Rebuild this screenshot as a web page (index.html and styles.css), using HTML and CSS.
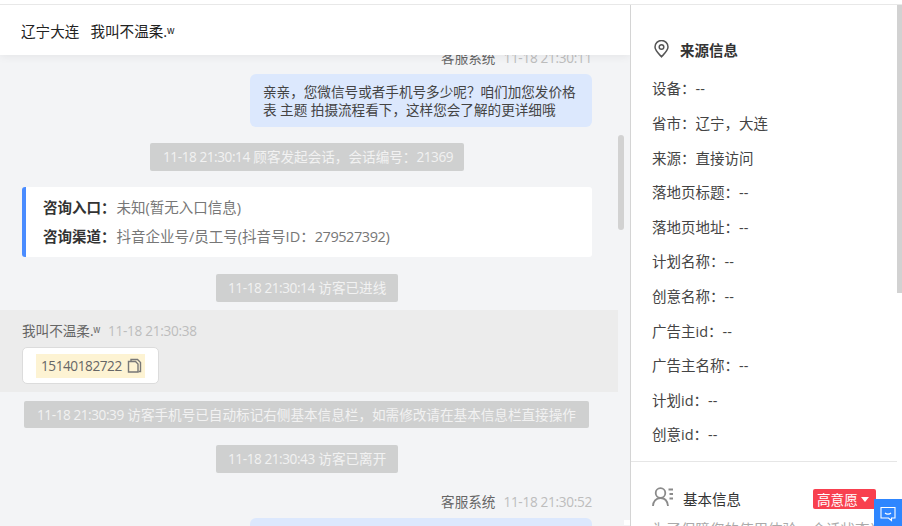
FILE: index.html
```html
<!DOCTYPE html>
<html lang="zh-CN">
<head>
<meta charset="utf-8">
<title>会话详情</title>
<link rel="stylesheet" href="styles.css">
</head>
<body>
<div class="app">
  <main class="chat">
    <header class="chat-head"><span>辽宁大连</span><span>我叫不温柔.ʷ</span></header>
    <div class="list">
      <div class="meta meta-right meta-first"><span class="who">客服系统</span><span class="time">11-18 21:30:11</span></div>
      <div class="bubble-row"><div class="bubble">亲亲，您微信号或者手机号多少呢？咱们加您发价格表 主题 拍摄流程看下，这样您会了解的更详细哦</div></div>
      <div class="sys sys-a"><span class="num">11-18 21:30:14</span> 顾客发起会话，会话编号：<span class="num">21369</span></div>
      <div class="card">
        <p class="card-row"><b>咨询入口：</b><span>未知(暂无入口信息)</span></p>
        <p class="card-row"><b>咨询渠道：</b><span>抖音企业号/员工号(抖音号ID：<span class="num">279527392</span>)</span></p>
      </div>
      <div class="sys sys-b"><span class="num">11-18 21:30:14</span> 访客已进线</div>
      <section class="visitor">
        <div class="meta"><span class="who">我叫不温柔.ʷ</span><span class="time">11-18 21:30:38</span></div>
        <div class="phone-box">
          <div class="phone"><span class="num">15140182722</span>
            <svg class="copy" width="15" height="15" viewBox="0 0 15 15" fill="none" stroke="#777" stroke-width="1.4"><path d="M4 3.500V1.500h6.500l3 3v9h-2"/><path d="M1.500 3.500h7l2.500 2.500v8h-9.500z"/></svg>
          </div>
        </div>
      </section>
      <div class="sys sys-c"><span class="num">11-18 21:30:39</span> 访客手机号已自动标记右侧基本信息栏，如需修改请在基本信息栏直接操作</div>
      <div class="sys sys-d"><span class="num">11-18 21:30:43</span> 访客已离开</div>
      <div class="meta meta-right meta-last"><span class="who">客服系统</span><span class="time">11-18 21:30:52</span></div>
      <div class="bubble-row"><div class="bubble">亲亲</div></div>
    </div>
    <div class="chat-thumb"></div>
    <div class="chat-corner"></div>
  </main>
  <aside class="side">
    <section class="source">
      <h2 class="side-title">
        <svg width="15" height="18" viewBox="0 0 15 18" fill="none" stroke="#555" stroke-width="1.500"><path d="M7.500 16.800C4 13 1 10.300 1 7a6.500 6.500 0 0 1 13 0c0 3.300-3 6-6.500 9.800z"/><circle cx="7.500" cy="7" r="2.300"/></svg>
        <span>来源信息</span>
      </h2>
      <p class="field">设备：--</p>
      <p class="field">省市：辽宁，大连</p>
      <p class="field">来源：直接访问</p>
      <p class="field">落地页标题：--</p>
      <p class="field">落地页地址：--</p>
      <p class="field">计划名称：--</p>
      <p class="field">创意名称：--</p>
      <p class="field">广告主id：--</p>
      <p class="field">广告主名称：--</p>
      <p class="field">计划id：--</p>
      <p class="field">创意id：--</p>
    </section>
    <section class="basic">
      <div class="basic-head">
        <svg class="basic-icon" width="22" height="20" viewBox="0 0 22 20" fill="none" stroke="#8a8a8a" stroke-width="1.800"><circle cx="8.500" cy="6" r="4.800"/><path d="M1 19c0-4.500 3-8 7.500-8s7 3 7.500 8"/><path d="M16.500 2.500H21M17.500 7H21M17.500 11.500H21"/></svg>
        <span class="basic-title">基本信息</span>
        <span class="tag">高意愿<i class="caret"></i></span>
      </div>
      <p class="tip">为了保障您的使用体验，会话状态当日</p>
    </section>
    <div class="side-thumb"></div>
    <button class="fab" aria-label="消息">
      <svg width="16" height="16" viewBox="0 0 16 16" fill="none" stroke="#fff" stroke-width="1.100"><path d="M1 1.500h14v10.500h-3.500v2.500l-3-2.500H1z"/><path d="M5 7c1.500 1.500 4.500 1.500 6 0"/></svg>
    </button>
  </aside>
</div>
</body>
</html>
```
FILE: styles.css
```css
* { box-sizing: border-box; }
html, body { margin: 0; height: 100%; }
body {
  overflow: hidden;
  background: #fff;
  color: #333;
  font-family: "Open Sans", "Noto Sans CJK SC", sans-serif;
  font-size: 13.6px;
}
.num { letter-spacing: -.43px; }
.app {
  display: flex;
  height: 526px;
  margin-top: 4px;
  border-top: 1px solid #e8e8e8;
  overflow: hidden;
}
.chat {
  position: relative;
  flex: 0 0 631px;
  display: flex;
  flex-direction: column;
  background: #f3f4f6;
  border-right: 1px solid #d4d4d4;
  overflow: hidden;
}
.chat-head {
  position: relative;
  z-index: 2;
  flex: 0 0 50px;
  display: flex;
  align-items: center;
  gap: 11px;
  padding: 1px 0 0 21px;
  background: #fff;
  color: #222;
  font-size: 14.6px;
  box-shadow: 0 2px 8px rgba(0, 0, 0, .06);
}
.list {
  display: flex;
  flex-direction: column;
  margin-top: -6px;
  width: 618px;
}
.meta {
  display: flex;
  gap: 8px;
  height: 18px;
  line-height: 18px;
}
.meta-right { justify-content: flex-end; padding-right: 26px; }
.meta-last { margin-top: 20px; }
.who { color: #666; }
.time { color: #bdbdbd; letter-spacing: -.3px; }
.bubble-row {
  display: flex;
  justify-content: flex-end;
  margin-top: 7px;
  padding-right: 26px;
}
.bubble {
  width: 342px;
  height: 53px;
  padding: 9px 13px;
  border-radius: 6px;
  background: #dce8fd;
  color: #444;
  line-height: 18px;
}
.sys {
  align-self: center;
  height: 28px;
  line-height: 28px;
  padding: 0 13px;
  border-radius: 2px;
  background: #cfd0d0;
  color: #f2f2f2;
  white-space: nowrap;
}
.sys-a { margin-top: 16px; width: 314px; margin-left: -4px; }
.sys-b { margin-top: 17px; width: 182px; margin-left: -4px; padding-left: 12px; }
.sys-c { margin-top: 9px; width: 565px; height: 27px; line-height: 27px; margin-left: -5px; }
.sys-d { margin-top: 17px; width: 182px; margin-left: -4px; padding-left: 12px; }
.card {
  margin: 16px 26px 0 22px;
  height: 70px;
  padding: 6px 0 0 17px;
  background: #fff;
  border-left: 4px solid #4a8cff;
  border-radius: 3px;
  font-size: 14.5px;
}
.card-row {
  display: flex;
  gap: 1px;
  margin: 0;
  height: 29px;
  line-height: 29px;
  color: #777;
}
.card-row b { color: #333; font-weight: 700; }
.visitor {
  margin-top: 8px;
  height: 82px;
  padding: 12px 0 0 22px;
  background: #ececec;
}
.phone-box {
  display: flex;
  align-items: center;
  width: 137px;
  height: 37px;
  margin-top: 7px;
  padding: 0 13px;
  background: #fff;
  border: 1px solid #dcdcdc;
  border-radius: 5px;
}
.phone {
  flex: 1;
  display: flex;
  align-items: center;
  gap: 5px;
  height: 24px;
  padding-left: 5px;
  background: #fdf3d3;
  color: #666;
  white-space: nowrap;
}
.chat-thumb {
  position: absolute;
  left: 618px;
  top: 130px;
  width: 6px;
  height: 95px;
  border-radius: 3px;
  background: #d2d2d2;
}
.chat-corner {
  position: absolute;
  left: 624px;
  bottom: 5px;
  width: 6px;
  height: 5px;
  background: #fff;
}
.side {
  position: relative;
  flex: 1;
  min-width: 0;
  color: #444;
  font-size: 14.5px;
}
.source {
  height: 457px;
  margin-right: 5px;
  padding-top: 34px;
  border-bottom: 1px solid #e6e6e6;
}
.side-title {
  display: flex;
  align-items: center;
  gap: 11px;
  height: 20px;
  margin: 0;
  padding-left: 23px;
  color: #333;
  font-size: 14.5px;
  font-weight: 700;
}
.field {
  margin: 0 0 0 21px;
  height: 34.6px;
  line-height: 34.6px;
}
.side-title + .field { margin-top: 13.4px; }
.basic { padding: 0 26px 0 21px; }
.basic-head {
  display: flex;
  align-items: center;
  height: 20px;
  margin-top: 27px;
}
.basic-icon { margin-top: -4px; }
.basic-title { margin: -2px 0 0 9px; color: #333; }
.tag {
  display: flex;
  align-items: center;
  gap: 3px;
  width: 63px;
  height: 20px;
  margin-left: auto;
  padding-left: 4px;
  border-radius: 2px;
  background: #f8404f;
  color: #fff;
  font-size: 13.6px;
}
.caret {
  border: 4px solid transparent;
  border-top: 5px solid #fff;
  border-bottom: 0;
}
.tip {
  margin: 9px 0 0;
  color: #aaa;
  white-space: nowrap;
}
.side-thumb {
  position: absolute;
  right: 0;
  top: 0;
  width: 5px;
  height: 288px;
  background: #d2d2d2;
}
.fab {
  position: absolute;
  right: 0;
  top: 494px;
  width: 28px;
  height: 28px;
  padding: 4px 0 0;
  border: 0;
  background: #2e86ff;
}
```
